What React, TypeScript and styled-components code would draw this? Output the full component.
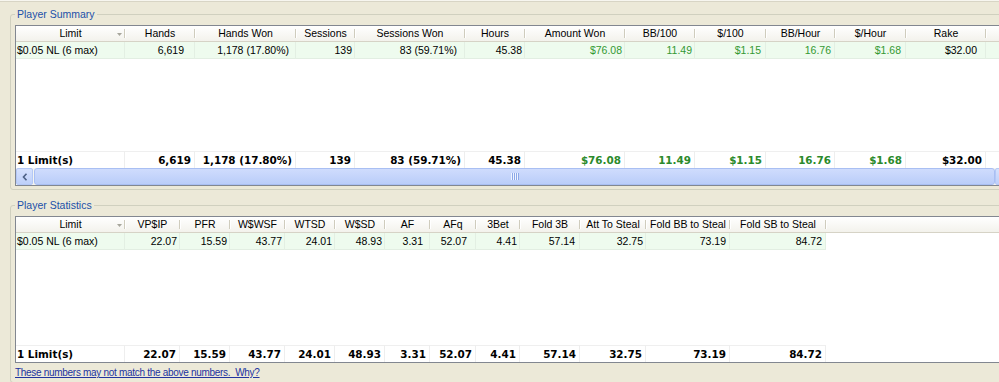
import React from 'react';
import styled, { createGlobalStyle } from 'styled-components';

const GlobalStyle = createGlobalStyle`
  html, body {
    margin: 0;
    padding: 0;
    background: #ece9d8;
    overflow: hidden;
  }
  body {
    font-family: "Liberation Sans", Arial, sans-serif;
    font-size: 10.5px;
    color: #000;
  }
`;

const Page = styled.div`
  width: 1030px;
  height: 382px;
  box-sizing: border-box;
  padding-left: 10px;
  border-top: 1px solid #f7f6ef;
`;

const TopEdge = styled.div`
  height: 1px;
  margin-left: -10px;
  background: #d8d5c5;
`;

const Group = styled.fieldset<{ $top: number }>`
  width: 1008px;
  box-sizing: border-box;
  margin: ${(p) => p.$top}px 0 0;
  padding: 4px 4px 3px;
  border: 1px solid #d0d0bf;
  border-radius: 3px;
`;

const Caption = styled.legend`
  padding: 0 2px;
  line-height: 13px;
  font-size: 10.5px;
  color: #2150a8;
`;

const ListView = styled.div<{ $height: number }>`
  height: ${(p) => p.$height}px;
  box-sizing: border-box;
  border: 1px solid #828790;
  background: #fff;
  display: flex;
  flex-direction: column;
  overflow: hidden;
`;

const Row = styled.div<{ $cols: string; $height: number }>`
  display: grid;
  grid-template-columns: ${(p) => p.$cols};
  height: ${(p) => p.$height}px;
  flex-shrink: 0;
`;

const HeaderRow = styled(Row)`
  background: linear-gradient(#ffffff, #f3f2ec);
  box-sizing: border-box;
  border-bottom: 1px solid #d6d3c6;
`;

const HeaderCell = styled.div<{ $sep: boolean }>`
  position: relative;
  text-align: center;
  line-height: 15px;
  white-space: nowrap;

  &::after {
    content: '';
    display: ${(p) => (p.$sep ? 'block' : 'none')};
    position: absolute;
    right: 0;
    top: 3px;
    bottom: 3px;
    width: 1px;
    background: #cfccbd;
    box-shadow: 1px 0 0 #ffffff;
  }
`;

const SortMark = styled.svg`
  position: absolute;
  right: 3px;
  top: 7px;
`;

const DataCell = styled.div<{ $align: string; $pad: number; $green?: boolean; $blank?: boolean }>`
  box-sizing: border-box;
  background: ${(p) => (p.$blank ? 'transparent' : '#eefbee')};
  border-right: 1px solid ${(p) => (p.$blank ? 'transparent' : '#e3efe3')};
  border-bottom: 1px solid ${(p) => (p.$blank ? 'transparent' : '#e2eee2')};
  text-align: ${(p) => p.$align};
  padding: ${(p) => (p.$align === 'left' ? '0 0 0 1px' : `0 ${p.$pad}px 0 0`)};
  line-height: 16px;
  white-space: nowrap;
  color: ${(p) => (p.$green ? '#339933' : '#000')};
`;

const TotalCell = styled.div<{ $align: string; $green?: boolean; $blank?: boolean }>`
  box-sizing: border-box;
  border-top: 1px solid ${(p) => (p.$blank ? 'transparent' : '#efefef')};
  border-right: 1px solid ${(p) => (p.$blank ? 'transparent' : '#eeeeee')};
  text-align: ${(p) => p.$align};
  padding: ${(p) => (p.$align === 'left' ? '0 0 0 1px' : '0 3px 0 0')};
  line-height: 16px;
  white-space: nowrap;
  font-family: "DejaVu Sans", Verdana, sans-serif;
  font-weight: bold;
  font-size: 10.4px;
  color: ${(p) => (p.$green ? '#2b8a2b' : '#000')};
`;

const Blank = styled.div`
  flex: 1;
`;

const ScrollBar = styled.div`
  height: 17px;
  flex-shrink: 0;
  display: flex;
  background: #f4f4f0;
`;

const ScrollButton = styled.div`
  width: 17px;
  height: 17px;
  box-sizing: border-box;
  border: 1px solid #b4c8f6;
  border-radius: 2px;
  background: linear-gradient(#d6e1fd, #bed0fa);
  display: flex;
  align-items: center;
  justify-content: center;
  flex-shrink: 0;
`;

const Thumb = styled.div`
  flex: 1;
  margin-left: 1px;
  box-sizing: border-box;
  border: 1px solid #a9bff3;
  border-radius: 3px;
  background: linear-gradient(#cfdcfd, #bacdf9);
  display: flex;
  align-items: center;
  justify-content: center;
`;

const Note = styled.a`
  display: block;
  margin-top: 3px;
  line-height: 13px;
  font-size: 10px;
  letter-spacing: -0.3px;
  color: #2233a0;
  text-decoration: underline;
  white-space: pre;
`;

interface Column {
  title: string;
  width: number;
  sort?: boolean;
  pad?: number;
  green?: boolean;
}

const summaryColumns: Column[] = [
  { title: 'Limit', width: 109, sort: true },
  { title: 'Hands', width: 70, pad: 10 },
  { title: 'Hands Won', width: 101, pad: 6 },
  { title: 'Sessions', width: 59, pad: 2 },
  { title: 'Sessions Won', width: 110, pad: 7 },
  { title: 'Hours', width: 60, pad: 2 },
  { title: 'Amount Won', width: 100, pad: 2, green: true },
  { title: 'BB/100', width: 70, pad: 2, green: true },
  { title: '$/100', width: 71, pad: 4, green: true },
  { title: 'BB/Hour', width: 69, pad: 3, green: true },
  { title: '$/Hour', width: 71, pad: 4, green: true },
  { title: 'Rake', width: 80, pad: 8 },
];

const summaryRow = ['$0.05 NL (6 max)', '6,619', '1,178 (17.80%)', '139', '83 (59.71%)', '45.38', '$76.08', '11.49', '$1.15', '16.76', '$1.68', '$32.00'];
const summaryTotal = ['1 Limit(s)', '6,619', '1,178 (17.80%)', '139', '83 (59.71%)', '45.38', '$76.08', '11.49', '$1.15', '16.76', '$1.68', '$32.00'];

const statColumns: Column[] = [
  { title: 'Limit', width: 109, sort: true },
  { title: 'VP$IP', width: 55, pad: 2 },
  { title: 'PFR', width: 50, pad: 2 },
  { title: 'W$WSF', width: 55, pad: 2 },
  { title: 'WTSD', width: 50, pad: 2 },
  { title: 'W$SD', width: 50, pad: 2 },
  { title: 'AF', width: 45, pad: 6 },
  { title: 'AFq', width: 46, pad: 8 },
  { title: '3Bet', width: 44, pad: 2 },
  { title: 'Fold 3B', width: 60, pad: 4 },
  { title: 'Att To Steal', width: 66, pad: 2 },
  { title: 'Fold BB to Steal', width: 84, pad: 3 },
  { title: 'Fold SB to Steal', width: 96, pad: 3 },
];

const statRow = ['$0.05 NL (6 max)', '22.07', '15.59', '43.77', '24.01', '48.93', '3.31', '52.07', '4.41', '57.14', '32.75', '73.19', '84.72'];
const statTotal = ['1 Limit(s)', '22.07', '15.59', '43.77', '24.01', '48.93', '3.31', '52.07', '4.41', '57.14', '32.75', '73.19', '84.72'];

const SortArrow = () => (
  <SortMark width="5" height="3" viewBox="0 0 5 3">
    <path d="M0 0h5L2.5 3z" fill="#a7a69c" />
  </SortMark>
);

const LeftArrow = () => (
  <svg width="6" height="8" viewBox="0 0 6 8">
    <path d="M4.5 0.8 1.5 4l3 3.2" fill="none" stroke="#4d6185" strokeWidth="1.6" />
  </svg>
);

const Grip = () => (
  <svg width="8" height="7" viewBox="0 0 8 7">
    {[0, 2, 4, 6].map((x) => (
      <g key={x}>
        <rect x={x} y="0" width="1" height="7" fill="#eef3ff" />
        <rect x={x + 1} y="0" width="1" height="7" fill="#8ca8e8" />
      </g>
    ))}
  </svg>
);

interface TableProps {
  columns: Column[];
  row: string[];
  total: string[];
  height: number;
  fillRest: boolean;
  scroll?: boolean;
}

const StatsTable = ({ columns, row, total, height, fillRest, scroll }: TableProps) => {
  const cols = columns.map((c) => `${c.width}px`).join(' ') + ' 1fr';
  return (
    <ListView $height={height}>
      <HeaderRow $cols={cols} $height={16}>
        {columns.map((c) => (
          <HeaderCell key={c.title} $sep>
            {c.title}
            {c.sort && <SortArrow />}
          </HeaderCell>
        ))}
        <HeaderCell $sep={false} />
      </HeaderRow>
      <Row $cols={cols} $height={17}>
        {columns.map((c, i) => (
          <DataCell key={c.title} $align={i === 0 ? 'left' : 'right'} $pad={c.pad ?? 2} $green={c.green}>
            {row[i]}
          </DataCell>
        ))}
        <DataCell $align="right" $pad={2} $blank={!fillRest} />
      </Row>
      <Blank />
      <Row $cols={cols} $height={17}>
        {columns.map((c, i) => (
          <TotalCell key={c.title} $align={i === 0 ? 'left' : 'right'} $green={c.green}>
            {total[i]}
          </TotalCell>
        ))}
        <TotalCell $align="right" $blank={!fillRest} />
      </Row>
      {scroll && (
        <ScrollBar>
          <ScrollButton>
            <LeftArrow />
          </ScrollButton>
          <Thumb>
            <Grip />
          </Thumb>
          <ScrollButton />
        </ScrollBar>
      )}
    </ListView>
  );
};

const App = () => (
  <>
    <GlobalStyle />
    <Page>
      <TopEdge />
      <Group $top={6}>
        <Caption>Player Summary</Caption>
        <StatsTable columns={summaryColumns} row={summaryRow} total={summaryTotal} height={161} fillRest scroll />
      </Group>
      <Group $top={9}>
        <Caption>Player Statistics</Caption>
        <StatsTable columns={statColumns} row={statRow} total={statTotal} height={147} fillRest={false} />
        <Note href="#">{'These numbers may not match the above numbers.  Why?'}</Note>
      </Group>
    </Page>
  </>
);

export default App;
